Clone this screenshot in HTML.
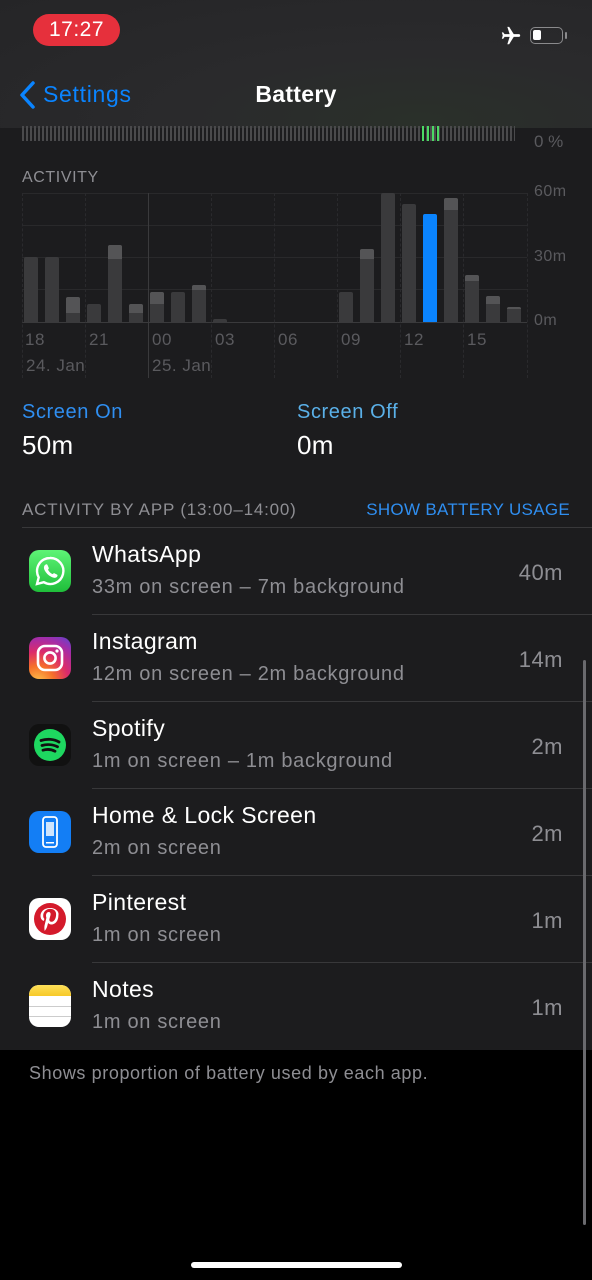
<!DOCTYPE html>
<html><head><meta charset="utf-8"><style>
*{margin:0;padding:0;box-sizing:border-box}
body{width:592px;height:1280px;background:#000;font-family:"Liberation Sans",sans-serif;position:relative;overflow:hidden}
.a{position:absolute;white-space:nowrap}
.sec{position:absolute;left:0;width:592px;background:#1c1c1e}
.bar{position:absolute;width:14px;border-radius:2px 2px 0 0;background:#3a3a3c;overflow:hidden}
.bar i{position:absolute;left:0;right:0;top:0;background:#545456}
.g{position:absolute;left:22px;width:505px;height:1px;background:#29292b}
.v{position:absolute;top:193px;height:185px;width:0;border-left:1px dashed #2a2a2d}
.xl{color:#5a5a5e;font-size:17px;top:330px;letter-spacing:.5px}
.dl{color:#5a5a5e;font-size:17px;top:356px;letter-spacing:.5px}
.yl{color:#5a5a5e;font-size:16px;left:534px;letter-spacing:.5px}
.name{left:92px;font-size:23px;color:#fff;letter-spacing:.4px}
.sub{left:92px;font-size:20px;color:#8e8e93;letter-spacing:.7px}
.val{right:29px;font-size:22px;color:#8e8e93;letter-spacing:.5px}
.sep{position:absolute;left:92px;right:0;height:1px;background:#38383a}
.ic{position:absolute;left:29px;width:42px;height:42px;border-radius:10px;overflow:hidden}
</style></head><body>
<div class="a" style="left:0;top:0;width:592px;height:128px;background:radial-gradient(ellipse at 420px 120px,#2a302a 0%,#2a2a2c 40%,#252527 100%)"></div>
<div class="a" style="left:33px;top:14px;width:87px;height:32px;border-radius:16px;background:#e6303c;color:#fff;font-size:21px;text-align:center;line-height:32px;letter-spacing:.5px">17:27</div>
<svg class="a" style="left:498px;top:25px" width="26" height="22" viewBox="0 0 24 24"><path fill="#fff" d="M21 16v-2l-8-5V3.5a1.5 1.5 0 0 0-3 0V9l-8 5v2l8-2.5V19l-2 1.5V22l3.5-1 3.5 1v-1.5L13 19v-5.5z" transform="rotate(90 12 12)"/></svg>
<div class="a" style="left:530px;top:27px;width:33px;height:17px;border:1.5px solid #8a8a8c;border-radius:5px"><div style="position:absolute;left:2px;top:2px;width:8px;height:10px;background:#fff;border-radius:2px"></div></div>
<div class="a" style="left:565px;top:32px;width:2px;height:7px;background:#8a8a8c;border-radius:1px"></div>
<svg class="a" style="left:17px;top:80px" width="20" height="30" viewBox="0 0 20 30"><path d="M16 3 L5 15 L16 27" stroke="#0a84ff" stroke-width="3.5" fill="none" stroke-linecap="round" stroke-linejoin="round"/></svg>
<div class="a" style="left:43px;top:81px;font-size:23px;color:#0a84ff;letter-spacing:.7px">Settings</div>
<div class="a" style="left:0;width:592px;text-align:center;top:81px;font-size:23px;color:#fff;font-weight:bold;letter-spacing:.3px">Battery</div>
<div class="sec" style="top:128px;height:400px"></div>
<div class="a" style="left:22px;top:126px;width:493px;height:15px;background:repeating-linear-gradient(90deg,#4a4a4c 0 2px,transparent 2px 4px)"></div>
<div class="a" style="left:422px;top:126px;width:20px;height:15px;background:repeating-linear-gradient(90deg,#4cd964 0 2px,transparent 2px 5px)"></div>
<div class="a" style="left:534px;top:132px;color:#5a5a5e;font-size:17px">0 %</div>
<div class="a" style="left:22px;top:169px;color:#8e8e93;font-size:16px;letter-spacing:.6px">ACTIVITY</div>
<div class="g" style="top:193px"></div><div class="g" style="top:225px"></div><div class="g" style="top:257px"></div><div class="g" style="top:289px"></div><div class="g" style="top:322px;background:#3a3a3c"></div>
<div class="v" style="left:22px"></div><div class="v" style="left:85px"></div><div class="v" style="left:148px;border-left:1px solid #3a3a3c"></div><div class="v" style="left:211px"></div><div class="v" style="left:274px"></div><div class="v" style="left:337px"></div><div class="v" style="left:400px"></div><div class="v" style="left:463px"></div><div class="v" style="left:527px"></div>
<div class="yl a" style="top:183px">60m</div><div class="yl a" style="top:248px">30m</div><div class="yl a" style="top:312px">0m</div>
<div class="bar" style="left:24px;top:257px;height:65px"></div>
<div class="bar" style="left:45px;top:257px;height:65px"></div>
<div class="bar" style="left:66px;top:297px;height:25px"><i style="height:16px"></i></div>
<div class="bar" style="left:87px;top:304px;height:18px"></div>
<div class="bar" style="left:108px;top:245px;height:77px"><i style="height:14px"></i></div>
<div class="bar" style="left:129px;top:304px;height:18px"><i style="height:9px"></i></div>
<div class="bar" style="left:150px;top:292px;height:30px"><i style="height:12px"></i></div>
<div class="bar" style="left:171px;top:292px;height:30px"></div>
<div class="bar" style="left:192px;top:285px;height:37px"><i style="height:5px"></i></div>
<div class="bar" style="left:213px;top:319px;height:3px"></div>
<div class="bar" style="left:339px;top:292px;height:30px"></div>
<div class="bar" style="left:360px;top:249px;height:73px"><i style="height:10px"></i></div>
<div class="bar" style="left:381px;top:193px;height:129px"></div>
<div class="bar" style="left:402px;top:204px;height:118px"></div>
<div class="bar" style="left:423px;top:214px;height:108px;background:#0a84ff"></div>
<div class="bar" style="left:444px;top:198px;height:124px"><i style="height:12px"></i></div>
<div class="bar" style="left:465px;top:275px;height:47px"><i style="height:6px"></i></div>
<div class="bar" style="left:486px;top:296px;height:26px"><i style="height:8px"></i></div>
<div class="bar" style="left:507px;top:307px;height:15px"><i style="height:2px"></i></div>
<div class="a xl" style="left:25px">18</div><div class="a xl" style="left:89px">21</div><div class="a xl" style="left:152px">00</div><div class="a xl" style="left:215px">03</div><div class="a xl" style="left:278px">06</div><div class="a xl" style="left:341px">09</div><div class="a xl" style="left:404px">12</div><div class="a xl" style="left:467px">15</div>
<div class="a dl" style="left:26px">24. Jan</div><div class="a dl" style="left:152px">25. Jan</div>
<div class="a" style="left:22px;top:401px;font-size:20px;color:#2f8ef0;letter-spacing:.6px">Screen On</div>
<div class="a" style="left:22px;top:430px;font-size:26px;color:#fff;letter-spacing:.3px">50m</div>
<div class="a" style="left:297px;top:401px;font-size:20px;color:#5ab0e8;letter-spacing:.6px">Screen Off</div>
<div class="a" style="left:297px;top:430px;font-size:26px;color:#fff;letter-spacing:.3px">0m</div>
<div class="a" style="left:22px;top:500px;font-size:17px;color:#8e8e93;letter-spacing:.8px">ACTIVITY BY APP (13:00–14:00)</div>
<div class="a" style="right:22px;top:500px;font-size:17px;color:#2f8ef0;letter-spacing:.3px">SHOW BATTERY USAGE</div>
<div class="a" style="left:22px;right:0;top:527px;height:1px;background:#38383a"></div>
<div class="sec" style="top:528px;height:522px"></div>

<div class="ic" style="top:550px;background:linear-gradient(#5ef476,#1fbe3a)"><svg width="42" height="42" viewBox="0 0 42 42"><path d="M21 8a13 13 0 0 0-11.3 19.4L8 34l6.8-1.8A13 13 0 1 0 21 8z" fill="none" stroke="#fff" stroke-width="2.4"/><path d="M16 15c1-1 2-1 2.5 0l1.3 3c.3.7-.8 1.5-.8 1.8 1 2 2.7 3.6 4.5 4.3.4 0 1.2-1.1 1.8-.9l2.8 1.4c.8.5.4 1.8-.4 2.5-1 1-3 1-5.5-.3A15 15 0 0 1 15.5 20c-1-2.300-.5-4 .5-5z" fill="#fff"/></svg></div>
<div class="a name" style="top:541px">WhatsApp</div><div class="a sub" style="top:576px">33m on screen – 7m background</div><div class="a val" style="top:560px">40m</div>
<div class="sep" style="top:614px"></div>

<div class="ic" style="top:637px;background:radial-gradient(circle at 20% 110%,#fdc94f 0%,#f6702a 30%,#dc2b6a 55%,#a12dab 80%,#5b47d0 100%)"><svg width="42" height="42"><rect x="9" y="9" width="24" height="24" rx="7" fill="none" stroke="#fff" stroke-width="2.6"/><circle cx="21" cy="21" r="5.6" fill="none" stroke="#fff" stroke-width="2.6"/><circle cx="28" cy="14" r="1.6" fill="#fff"/></svg></div>
<div class="a name" style="top:628px">Instagram</div><div class="a sub" style="top:663px">12m on screen – 2m background</div><div class="a val" style="top:647px">14m</div>
<div class="sep" style="top:701px"></div>

<div class="ic" style="top:724px;background:#111"><svg width="42" height="42"><circle cx="21" cy="21" r="16" fill="#1ed760"/><path d="M12 16.5c6-2 13-1.5 18 1.5M13 21.5c5-1.5 11-1 15.5 1.3M14 26.2c4-1.2 8.5-.8 12 1" stroke="#111" stroke-width="2.8" fill="none" stroke-linecap="round"/></svg></div>
<div class="a name" style="top:715px">Spotify</div><div class="a sub" style="top:750px">1m on screen – 1m background</div><div class="a val" style="top:734px">2m</div>
<div class="sep" style="top:788px"></div>

<div class="ic" style="top:811px;background:#137ef5"><svg width="42" height="42"><rect x="14" y="6" width="14" height="30" rx="3" fill="none" stroke="#fff" stroke-width="1.8"/><g fill="#fff"><rect x="17" y="11" width="8" height="14" opacity=".8"/></g><rect x="17" y="31" width="8" height="1.5" fill="#fff"/></svg></div>
<div class="a name" style="top:802px">Home &amp; Lock Screen</div><div class="a sub" style="top:837px">2m on screen</div><div class="a val" style="top:821px">2m</div>
<div class="sep" style="top:875px"></div>

<div class="ic" style="top:898px;background:#fff"><svg width="42" height="42"><circle cx="21" cy="21" r="16" fill="#d41a2b"/><path d="M21 10c-6.5 0-9.5 4.2-9.5 7.8 0 2.3.9 4.2 2.8 5 .3.1.6 0 .7-.4l.3-1.1c.1-.4 0-.5-.2-.8-.6-.7-.9-1.5-.9-2.8 0-3.600 2.7-6.8 7-6.8 3.8 0 5.9 2.3 5.9 5.4 0 4-1.8 7.5-4.5 7.5-1.5 0-2.6-1.2-2.2-2.700.4-1.8 1.2-3.7 1.2-5 0-1.1-.6-2.1-1.9-2.100-1.5 0-2.7 1.6-2.7 3.6 0 1.3.4 2.2.4 2.2l-1.8 7.5c-.5 2.2 0 5 0 5.3 0 .2.2.2.3.1.1-.2 1.8-2.2 2.3-4.3l.9-3.5c.5.9 1.8 1.6 3.2 1.6 4.2 0 7.1-3.9 7.1-9C30.4 13.8 26.9 10 21 10z" fill="#fff"/></svg></div>
<div class="a name" style="top:889px">Pinterest</div><div class="a sub" style="top:924px">1m on screen</div><div class="a val" style="top:908px">1m</div>
<div class="sep" style="top:962px"></div>

<div class="ic" style="top:985px;background:#fff"><div style="height:11px;background:linear-gradient(#fde05a,#f7c928)"></div><div style="position:absolute;left:0;right:0;top:21px;height:1px;background:#ccc"></div><div style="position:absolute;left:0;right:0;top:31px;height:1px;background:#ccc"></div></div>
<div class="a name" style="top:976px">Notes</div><div class="a sub" style="top:1011px">1m on screen</div><div class="a val" style="top:995px">1m</div>

<div class="a" style="left:29px;top:1063px;font-size:18px;color:#8e8e93;letter-spacing:.6px">Shows proportion of battery used by each app.</div>
<div class="a" style="left:583px;top:660px;width:3px;height:565px;border-radius:2px;background:#6a6a6e"></div>
<div class="a" style="left:191px;top:1262px;width:211px;height:6px;border-radius:3px;background:#fff"></div>
</body></html>
